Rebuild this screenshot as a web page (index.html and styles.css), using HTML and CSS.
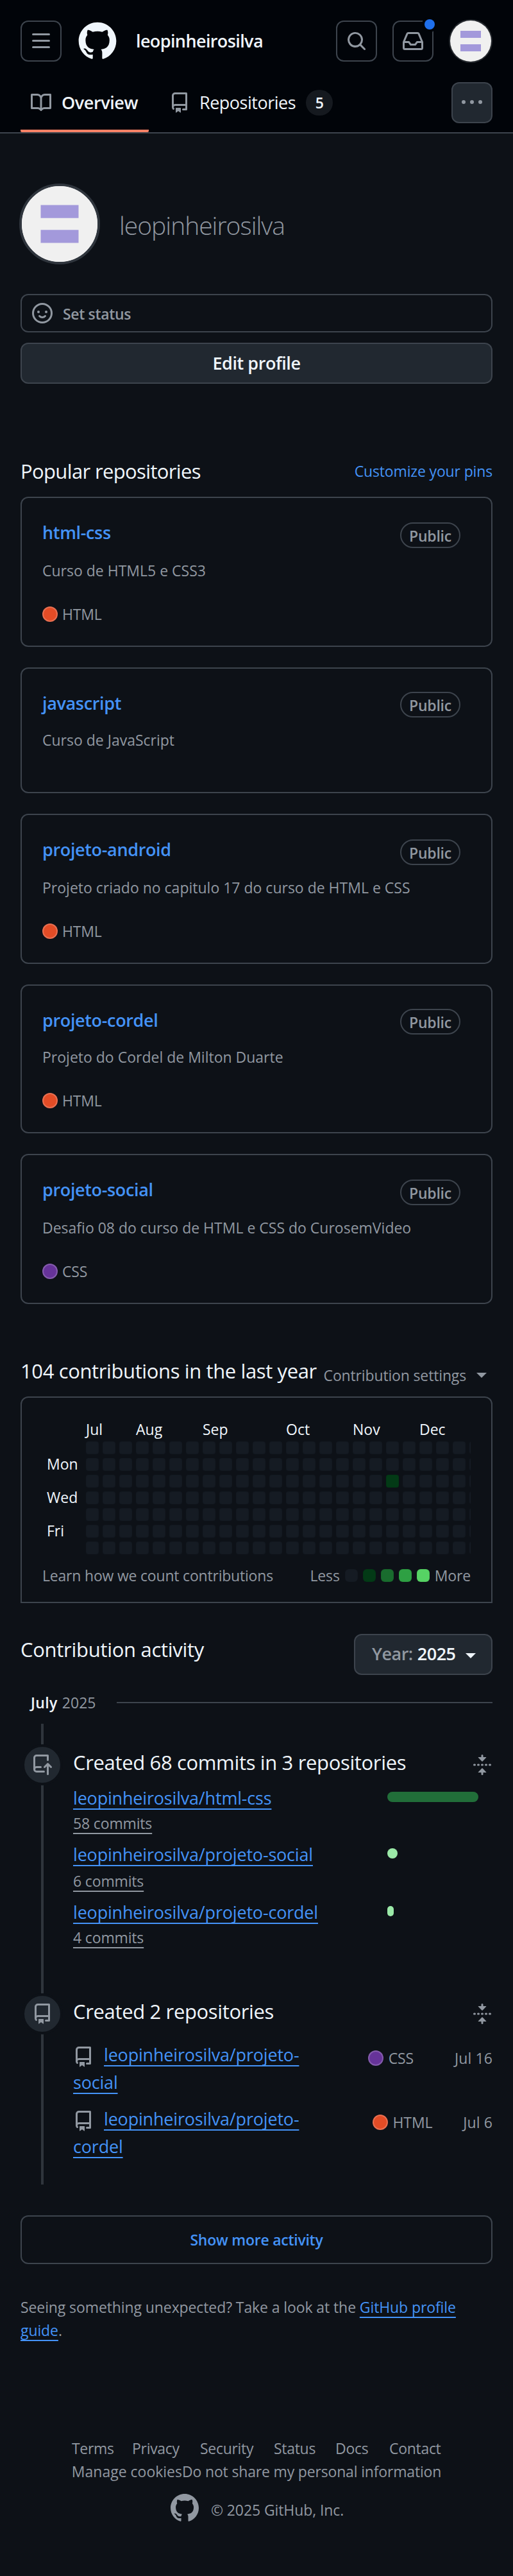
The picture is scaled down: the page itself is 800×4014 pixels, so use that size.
FILE: index.html
```html
<!DOCTYPE html>
<html lang="en">
<head>
<meta charset="utf-8">
<title>leopinheirosilva</title>
<link rel="stylesheet" href="styles.css">
</head>
<body>
<svg class="sprite" aria-hidden="true">
  <symbol id="i-mark" viewBox="0 0 24 24"><path d="M12 1C5.923 1 1 5.923 1 12c0 4.867 3.149 8.979 7.521 10.436.55.096.756-.233.756-.522 0-.262-.013-1.128-.013-2.049-2.764.509-3.479-.674-3.699-1.292-.124-.317-.66-1.293-1.127-1.554-.385-.207-.936-.715-.014-.729.866-.014 1.485.797 1.691 1.128.99 1.663 2.571 1.196 3.204.907.096-.715.385-1.196.701-1.471-2.448-.275-5.005-1.224-5.005-5.432 0-1.196.426-2.186 1.128-2.956-.111-.275-.496-1.402.11-2.915 0 0 .921-.288 3.024 1.128a10.193 10.193 0 0 1 2.75-.371c.936 0 1.871.123 2.75.371 2.104-1.43 3.025-1.128 3.025-1.128.605 1.513.221 2.64.111 2.915.701.77 1.127 1.747 1.127 2.956 0 4.222-2.571 5.157-5.019 5.432.399.344.743 1.004.743 2.035 0 1.471-.014 2.654-.014 3.025 0 .289.206.632.756.522C19.851 20.979 23 16.854 23 12c0-6.077-4.922-11-11-11Z"/></symbol>
  <symbol id="i-bars" viewBox="0 0 16 16"><path d="M1 2.75A.75.75 0 0 1 1.75 2h12.5a.75.75 0 0 1 0 1.5H1.75A.75.75 0 0 1 1 2.75Zm0 5A.75.75 0 0 1 1.75 7h12.5a.75.75 0 0 1 0 1.5H1.75A.75.75 0 0 1 1 7.75ZM1.75 12h12.5a.75.75 0 0 1 0 1.5H1.75a.75.75 0 0 1 0-1.5Z"/></symbol>
  <symbol id="i-search" viewBox="0 0 16 16"><path d="M10.68 11.74a6 6 0 0 1-7.922-8.982 6 6 0 0 1 8.982 7.922l3.04 3.04a.749.749 0 0 1-.326 1.275.749.749 0 0 1-.734-.215ZM11.5 7a4.499 4.499 0 1 0-8.997 0A4.499 4.499 0 0 0 11.5 7Z"/></symbol>
  <symbol id="i-inbox" viewBox="0 0 16 16"><path d="M2.8 2.06A1.75 1.75 0 0 1 4.41 1h7.18c.7 0 1.333.417 1.61 1.06l2.74 6.395c.04.093.06.194.06.295v4.5A1.75 1.75 0 0 1 14.25 15H1.75A1.75 1.75 0 0 1 0 13.25v-4.5c0-.101.02-.202.06-.295Zm1.61.44a.25.25 0 0 0-.23.152L1.887 8H4.75a.75.75 0 0 1 .6.3L6.625 10h2.75l1.275-1.7a.75.75 0 0 1 .6-.3h2.863L11.82 2.652a.25.25 0 0 0-.23-.152Zm10.09 7h-2.875l-1.275 1.7a.75.75 0 0 1-.6.3h-3.5a.75.75 0 0 1-.6-.3L4.375 9.5H1.5v3.75c0 .138.112.25.25.25h12.5a.25.25 0 0 0 .25-.25Z"/></symbol>
  <symbol id="i-book" viewBox="0 0 16 16"><path d="M0 1.75A.75.75 0 0 1 .75 1h4.253c1.227 0 2.317.59 3 1.501A3.743 3.743 0 0 1 11.006 1h4.245a.75.75 0 0 1 .75.75v10.5a.75.75 0 0 1-.75.75h-4.507a2.25 2.25 0 0 0-1.591.659l-.622.621a.75.75 0 0 1-1.06 0l-.622-.621A2.25 2.25 0 0 0 5.258 13H.75a.75.75 0 0 1-.75-.75Zm7.251 10.324.004-5.073-.002-2.253A2.25 2.25 0 0 0 5.003 2.5H1.5v9h3.757a3.75 3.75 0 0 1 1.994.574ZM8.755 4.75l-.004 7.322a3.752 3.752 0 0 1 1.992-.572H14.5v-9h-3.495a2.25 2.25 0 0 0-2.25 2.25Z"/></symbol>
  <symbol id="i-repo" viewBox="0 0 16 16"><path d="M2 2.5A2.5 2.5 0 0 1 4.5 0h8.75a.75.75 0 0 1 .75.75v12.5a.75.75 0 0 1-.75.75h-2.5a.75.75 0 0 1 0-1.5h1.75v-2h-8a1 1 0 0 0-.714 1.7.75.75 0 1 1-1.072 1.05A2.495 2.495 0 0 1 2 11.5Zm10.5-1h-8a1 1 0 0 0-1 1v6.708A2.486 2.486 0 0 1 4.5 9h8ZM5 12.25a.25.25 0 0 1 .25-.25h3.5a.25.25 0 0 1 .25.25v3.25a.25.25 0 0 1-.4.2l-1.45-1.087a.249.249 0 0 0-.3 0L5.4 15.7a.25.25 0 0 1-.4-.2Z"/></symbol>
  <symbol id="i-push" viewBox="0 0 16 16"><path d="M1 2.5A2.5 2.5 0 0 1 3.5 0h8.75a.75.75 0 0 1 .75.75v3.5a.75.75 0 0 1-1.5 0V1.5h-8a1 1 0 0 0-1 1v6.708A2.493 2.493 0 0 1 3.5 9h3.25a.75.75 0 0 1 0 1.5H3.5a1 1 0 0 0 0 2h5.75a.75.75 0 0 1 0 1.5H3.5A2.5 2.5 0 0 1 1 11.5Zm13.23 7.79-1.224-1.224v6.184a.75.75 0 0 1-1.5 0V9.066L10.28 10.29a.75.75 0 0 1-1.06-1.061l2.505-2.504a.75.75 0 0 1 1.06 0L15.29 9.23a.751.751 0 0 1-.018 1.042.751.751 0 0 1-1.042.018Z"/></symbol>
  <symbol id="i-smiley" viewBox="0 0 16 16"><path d="M8 0a8 8 0 1 1 0 16A8 8 0 0 1 8 0ZM1.5 8a6.5 6.5 0 1 0 13 0 6.5 6.5 0 0 0-13 0Z"/><circle cx="5" cy="7" r="1"/><circle cx="11" cy="7" r="1"/><path d="M5.75 10.24c.5.7 1.3 1.01 2.25 1.01s1.75-.31 2.25-1.01" fill="none" stroke="currentColor" stroke-width="1.5" stroke-linecap="round"/></symbol>
  <symbol id="i-kebab" viewBox="0 0 16 16"><circle cx="1.5" cy="7.5" r="1.5"/><circle cx="8" cy="7.5" r="1.5"/><circle cx="14.5" cy="7.5" r="1.5"/></symbol>
  <symbol id="i-fold" viewBox="0 0 16 16"><path d="M10.896 2H8.75V.75a.75.75 0 0 0-1.5 0V2H5.104a.25.25 0 0 0-.177.427l2.896 2.896a.25.25 0 0 0 .354 0l2.896-2.896A.25.25 0 0 0 10.896 2ZM8.75 15.25a.75.75 0 0 1-1.5 0V14H5.104a.25.25 0 0 1-.177-.427l2.896-2.896a.25.25 0 0 1 .354 0l2.896 2.896a.25.25 0 0 1-.177.427H8.75v1.25Z"/><path d="M1.75 8h.5M4.75 8h.5M7.75 8h.5M10.75 8h.5M13.75 8h.5" fill="none" stroke="currentColor" stroke-width="1.5" stroke-linecap="round"/></symbol>
  <symbol id="i-avatar" viewBox="0 0 64 64"><path fill="#f0f0f0" d="M0 0h64v64H0z"/><path fill="#a399db" d="M16 16h32v11H16zM16 37h32v11H16z"/></symbol>
</svg>

<header class="header">
  <div class="topbar">
    <button class="icon-btn"><svg class="icon"><use href="#i-bars"/></svg></button>
    <svg class="logo"><use href="#i-mark"/></svg>
    <span class="context">leopinheirosilva</span>
    <div class="actions">
      <button class="icon-btn"><svg class="icon"><use href="#i-search"/></svg></button>
      <button class="icon-btn inbox"><svg class="icon"><use href="#i-inbox"/></svg><span class="unread"></span></button>
      <svg class="avatar-sm"><use href="#i-avatar"/></svg>
    </div>
  </div>
  <nav class="tabs">
    <a class="tab tab-active"><svg class="icon"><use href="#i-book"/></svg><span>Overview</span></a>
    <a class="tab"><svg class="icon"><use href="#i-repo"/></svg><span class="tab-repos">Repositories</span><span class="counter">5</span></a>
    <button class="icon-btn more"><svg class="icon"><use href="#i-kebab"/></svg></button>
  </nav>
</header>

<main class="main">
  <section class="profile">
    <svg class="avatar-lg" viewBox="0 0 64 64"><use href="#i-avatar"/></svg>
    <h1 class="username">leopinheirosilva</h1>
  </section>
  <button class="status"><svg class="icon"><use href="#i-smiley"/></svg><span>Set status</span></button>
  <button class="edit">Edit profile</button>

  <div class="pins-head"><h2 class="h2 pins-title">Popular repositories</h2><a class="link customize">Customize your pins</a></div>
  <div class="cards">
    <article class="card">
      <div class="card-top"><a class="repo">html-css</a><span class="pill">Public</span></div>
      <p class="desc">Curso de HTML5 e CSS3</p>
      <p class="lang"><i class="dot html"></i><span>HTML</span></p>
    </article>
    <article class="card card-short">
      <div class="card-top"><a class="repo">javascript</a><span class="pill">Public</span></div>
      <p class="desc">Curso de JavaScript</p>
    </article>
    <article class="card">
      <div class="card-top"><a class="repo">projeto-android</a><span class="pill">Public</span></div>
      <p class="desc">Projeto criado no capitulo 17 do curso de HTML e CSS</p>
      <p class="lang"><i class="dot html"></i><span>HTML</span></p>
    </article>
    <article class="card card-tight">
      <div class="card-top"><a class="repo">projeto-cordel</a><span class="pill">Public</span></div>
      <p class="desc">Projeto do Cordel de Milton Duarte</p>
      <p class="lang"><i class="dot html"></i><span>HTML</span></p>
    </article>
    <article class="card">
      <div class="card-top"><a class="repo">projeto-social</a><span class="pill">Public</span></div>
      <p class="desc">Desafio 08 do curso de HTML e CSS do CurosemVideo</p>
      <p class="lang"><i class="dot css"></i><span>CSS</span></p>
    </article>
  </div>

  <div class="contrib-head"><h2 class="h2 contrib-title">104 contributions in the last year</h2><span class="settings">Contribution settings<i class="caret"></i></span></div>
  <section class="calendar">
    <div class="graph" id="graph"></div>
    <div class="legend">
      <span class="learn">Learn how we count contributions</span>
      <span class="scale">Less<i class="cell l0"></i><i class="cell l1"></i><i class="cell l2"></i><i class="cell l3"></i><i class="cell l4"></i>More</span>
    </div>
  </section>

  <div class="activity-head"><h2 class="h2 activity-title">Contribution activity</h2><button class="year"><span class="year-label">Year:</span><span>2025</span><i class="caret"></i></button></div>
  <h3 class="month"><b>July</b><span>2025</span></h3>

  <section class="event event-commits">
    <span class="badge"><svg class="icon"><use href="#i-push"/></svg></span>
    <div class="event-body">
      <div class="event-head"><h4 class="event-title">Created 68 commits in 3 repositories</h4><svg class="icon"><use href="#i-fold"/></svg></div>
      <div class="commit-row">
        <div><a class="ulink">leopinheirosilva/html-css</a><a class="count">58 commits</a></div>
        <span class="bar" style="width:142px"></span>
      </div>
      <div class="commit-row commit-row-tall">
        <div><a class="ulink">leopinheirosilva/projeto-social</a><a class="count">6 commits</a></div>
        <span class="bar bar-light" style="width:16px"></span>
      </div>
      <div class="commit-row">
        <div><a class="ulink">leopinheirosilva/projeto-cordel</a><a class="count">4 commits</a></div>
        <span class="bar bar-light" style="width:10px"></span>
      </div>
    </div>
  </section>
  <section class="event event-repos">
    <span class="badge"><svg class="icon"><use href="#i-repo"/></svg></span>
    <div class="event-body">
      <div class="event-head"><h4 class="event-title created-title">Created 2 repositories</h4><svg class="icon"><use href="#i-fold"/></svg></div>
      <div class="repo-row">
        <div class="repo-name"><svg class="icon"><use href="#i-repo"/></svg><a class="ulink-inline">leopinheirosilva/projeto-social</a></div>
        <span class="repo-lang lang-css"><i class="dot css"></i>CSS</span><span class="date">Jul 16</span>
      </div>
      <div class="repo-row">
        <div class="repo-name"><svg class="icon"><use href="#i-repo"/></svg><a class="ulink-inline">leopinheirosilva/projeto-cordel</a></div>
        <span class="repo-lang lang-html"><i class="dot html"></i>HTML</span><span class="date">Jul 6</span>
      </div>
    </div>
  </section>

  <button class="show-more">Show more activity</button>
  <p class="hint">Seeing something unexpected? Take a look at the <a>GitHub profile guide</a>.</p>
</main>

<footer class="footer">
  <div class="foot-links"><a>Terms</a><a>Privacy</a><a>Security</a><a>Status</a><a>Docs</a><a>Contact</a></div>
  <div class="foot-row"><a class="manage">Manage cookies</a><a class="share">Do not share my personal information</a></div>
  <div class="foot-row copy"><svg class="foot-logo"><use href="#i-mark"/></svg><span>© 2025 GitHub, Inc.</span></div>
</footer>
<script src="graph.js"></script>
</body>
</html>
```
FILE: styles.css
```css
* { box-sizing: border-box; }
body { margin: 0; width: 800px; min-height: 4014px; background: #0d1117; color: #f0f6fc; font-family: "Open Sans", "Noto Sans", sans-serif; font-size: 23px; line-height: 36px; font-weight: 400; letter-spacing: -0.15px; }
h1, h2, h3, h4, p { margin: 0; font-weight: 400; }
button { font: inherit; color: inherit; letter-spacing: inherit; padding: 0; margin: 0; background: none; }
.sprite { position: absolute; width: 0; height: 0; }
.icon { width: 32px; height: 32px; flex: none; color: #9198a1; fill: currentColor; }

.header { height: 208px; padding: 32px 32px 0; background: #010409; border-bottom: 2px solid #3d444d; }
.topbar { display: flex; align-items: center; height: 64px; }
.icon-btn { display: flex; align-items: center; justify-content: center; width: 64px; height: 64px; border: 2px solid #3d444d; border-radius: 12px; flex: none; }
.logo { width: 64px; height: 64px; margin-left: 24px; fill: #f0f6fc; }
.context { margin-left: 28px; font-size: 27px; font-weight: 600; letter-spacing: -0.61px; }
.actions { display: flex; gap: 24px; margin-left: auto; }
.inbox { position: relative; }
.unread { position: absolute; top: -4px; right: -4px; width: 16px; height: 16px; border-radius: 50%; background: #1f6feb; box-shadow: 0 0 0 4px #010409; }
.avatar-sm { width: 64px; height: 64px; margin: 0 2px; border-radius: 50%; box-shadow: 0 0 0 2px #25292e; }
.tabs { display: flex; gap: 16px; margin-top: 32px; height: 78px; }
.tab { display: flex; align-items: center; height: 78px; padding: 0 16px 14px; gap: 16px; font-size: 27px; letter-spacing: -0.5px; }
.tab-active { width: 200px; font-weight: 600; letter-spacing: -0.43px; padding-bottom: 10px; border-bottom: 4px solid #f78166; border-radius: 0 0 2px 2px; }
.tab-repos { margin-left: -1px; }
.counter { width: 42px; height: 40px; line-height: 40px; border-radius: 20px; background: #15191f; text-align: center; font-size: 23px; font-weight: 600; }
.more { margin-left: auto; background: #212830; }

.main { padding: 78px 32px 0; }
.profile { display: flex; align-items: center; height: 126px; margin-left: -2px; }
.avatar-lg { width: 126px; height: 126px; border: 4px solid #2f353d; border-radius: 50%; background: #f0f0f0; }
.username { margin: 4px 0 0 30px; font-size: 39px; font-weight: 300; line-height: 50px; letter-spacing: -1px; color: #9198a1; }
.status { display: flex; align-items: center; gap: 16px; width: 736px; height: 60px; margin-top: 46px; padding-left: 16px; border: 2px solid #3d444d; border-radius: 12px; font-weight: 600; letter-spacing: -0.35px; color: #9198a1; }
.status span { padding-top: 2px; }
.edit { display: block; width: 736px; height: 64px; margin-top: 16px; border: 2px solid #3d444d; border-radius: 12px; background: #212830; font-size: 27px; font-weight: 600; letter-spacing: -0.45px; }

.h2 { font-size: 31px; line-height: 48px; }
.link { color: #4493f8; }
.pins-head { display: flex; justify-content: space-between; align-items: center; height: 48px; margin-top: 112px; }
.pins-title { letter-spacing: -0.64px; }
.customize { letter-spacing: -0.15px; }
.cards { display: flex; flex-direction: column; gap: 32px; margin-top: 16px; }
.card { height: 234px; padding: 32px; border: 2px solid #3d444d; border-radius: 12px; color: #9198a1; }
.card-short { height: 196px; }
.card-tight { height: 232px; }
.card-top { display: flex; justify-content: space-between; height: 42px; padding-right: 16px; }
.repo { padding-top: 1px; font-size: 27px; line-height: 42px; font-weight: 600; letter-spacing: -0.35px; color: #4493f8; }
.pill { width: 94px; height: 40px; margin-top: 6px; border: 2px solid #3d444d; border-radius: 20px; line-height: 38px; text-align: center; font-weight: 600; letter-spacing: -0.22px; }
.desc { margin-top: 21px; letter-spacing: 0; }
.card-short .pill, .card-tight .pill { margin-top: 4px; }
.card-short .desc, .card-tight .desc { margin-top: 19px; }
.lang { display: flex; align-items: center; gap: 7px; margin-top: 31px; }
.lang span { padding-top: 1px; }
.dot { flex: none; width: 24px; height: 24px; border-radius: 50%; border: 2px solid rgba(255, 255, 255, .2); }
.html { background: #e34c26; }
.css { background: #663399; }

.contrib-head { display: flex; justify-content: space-between; height: 48px; margin-top: 80px; padding-right: 9px; }
.contrib-title { letter-spacing: -0.38px; white-space: nowrap; }
.settings { display: flex; align-items: center; gap: 16px; height: 36px; margin-top: 13px; color: #9198a1; }
.caret { width: 0; height: 0; border: 8px solid transparent; border-top-color: currentColor; border-bottom: 0; }
.calendar { height: 322px; margin-top: 16px; padding: 36px 32px 0; border: 2px solid #3d444d; border-radius: 12px 12px 0 0; }
.graph { display: grid; grid-template-columns: 62px repeat(24, 20px); grid-template-rows: 26px repeat(7, 20px); gap: 6px; width: 668px; overflow-x: clip; overflow-y: visible; letter-spacing: 0; }
.cell { width: 20px; height: 20px; border-radius: 4px; border: 1px solid rgba(1, 4, 9, .05); }
.l0 { background: #151b23; }
.l1 { background: #033a16; }
.l2 { background: #196c2e; }
.l3 { background: #2ea043; }
.l4 { background: #56d364; }
.month-label { line-height: 26px; }
.day-label { padding-left: 7px; line-height: 18px; }
.legend { display: flex; justify-content: space-between; margin-top: 15px; color: #9198a1; }
.learn { letter-spacing: -0.2px; }
.scale { display: flex; align-items: center; gap: 8px; }
.scale .cell { border-radius: 6px; }

.activity-head { display: flex; justify-content: space-between; height: 64px; margin-top: 48px; }
.activity-title { letter-spacing: -0.29px; }
.year { display: flex; align-items: center; width: 216px; height: 64px; padding: 0 0 2px 26px; border: 2px solid #3d444d; border-radius: 12px; background: #212830; font-size: 27px; font-weight: 600; letter-spacing: -0.5px; }
.year-label { margin-right: 7px; color: #9198a1; }
.year .caret { margin-left: 15px; margin-top: 5px; }
.month { display: flex; align-items: center; gap: 7px; margin-top: 25px; padding-left: 16px; font-size: 23px; letter-spacing: 0; }
.month b { font-weight: 600; letter-spacing: .4px; }
.month span { color: #9198a1; }
.month::after { content: ""; width: 586px; height: 2px; margin-left: auto; background: #3d444d; }

.event { position: relative; display: flex; gap: 16px; padding: 32px 0 0 2px; }
.event::before { content: ""; position: absolute; left: 32px; top: 0; bottom: 0; width: 4px; background: #2f353c; }
.event-commits { height: 388px; margin-top: 15px; }
.event-repos { height: 330px; }
.badge { position: relative; display: flex; align-items: center; justify-content: center; flex: none; width: 64px; height: 64px; border: 4px solid #0d1117; border-radius: 50%; background: #212830; }
.event-body { flex: 1; padding-top: 4px; }
.event-head { display: flex; justify-content: space-between; height: 48px; }
.event-head .icon { margin-top: 12px; }
.event-title { font-size: 31px; line-height: 48px; letter-spacing: -0.35px; }
.commit-row { display: flex; height: 88px; }
.event-head + .commit-row { margin-top: 10px; }
.commit-row-tall { height: 90px; }
.commit-row > div { display: flex; flex-direction: column; align-items: flex-start; width: 490px; padding-top: 1px; }
.ulink, .ulink-inline { font-size: 27px; line-height: 42px; letter-spacing: -0.19px; color: #4493f8; }
.ulink, .ulink-inline, .count, .hint a { text-decoration: underline; text-decoration-thickness: 2px; text-underline-offset: 6px; text-decoration-skip-ink: none; }
.count { color: #9198a1; }
.commit-row-tall .count { margin-top: 2px; }
.bar { height: 16px; margin-top: 12px; border-radius: 8px; background: #216e39; }
.bar-light { background: #9be9a8; }
.repo-row { display: flex; height: 100px; color: #9198a1; }
.repo-row > span { margin-top: 9px; }
.event-head + .repo-row { margin-top: 22px; }
.repo-name { width: 400px; padding-top: 1px; line-height: 42px; }
.repo-name .icon { margin-right: 16px; vertical-align: -9px; }
.repo-lang { display: flex; align-items: center; gap: 8px; height: 36px; margin-left: auto; }
.date { letter-spacing: .1px; }
.lang-css { margin-right: 64px; }
.lang-html { margin-right: 48px; }

.show-more { display: block; width: 736px; height: 76px; margin-top: 48px; border: 2px solid #3d444d; border-radius: 12px; color: #4493f8; font-weight: 600; letter-spacing: -0.25px; }
.hint { margin-top: 49px; color: #9198a1; letter-spacing: -0.1px; }
.hint a { color: #4493f8; }

.footer { margin-top: 148px; color: #9198a1; letter-spacing: -0.1px; }
.foot-row { display: flex; justify-content: center; }
.foot-links { display: grid; grid-template-columns: 94px 106px 115px 96px 84px 81px; justify-content: center; letter-spacing: -0.3px; }
.manage { letter-spacing: 0; }
.share { letter-spacing: -0.17px; }
.copy { align-items: flex-start; gap: 17px; margin-top: 15px; }
.copy span { margin-top: 9px; }
.foot-logo { width: 48px; height: 48px; fill: #9198a1; }
```
FILE: graph.js
```js
// Contribution calendar: one column per week, one row per weekday.
const graph = document.getElementById('graph');
const months = [['Jul', 0], ['Aug', 3], ['Sep', 7], ['Oct', 12], ['Nov', 16], ['Dec', 20]];
const days = [['Mon', 1], ['Wed', 3], ['Fri', 5]];

function add(className, col, row, text) {
  const el = document.createElement('span');
  el.className = className;
  el.style.gridColumn = col;
  el.style.gridRow = row;
  if (text) el.textContent = text;
  graph.appendChild(el);
}

months.forEach(([name, week]) => add('month-label', (week + 2) + ' / span 3', 1, name));
days.forEach(([name, day]) => add('day-label', 1, day + 2, name));
for (let week = 0; week < 24; week++) {
  for (let day = 0; day < 7; day++) {
    add('cell ' + (week === 18 && day === 2 ? 'l1' : 'l0'), week + 2, day + 2);
  }
}
```
